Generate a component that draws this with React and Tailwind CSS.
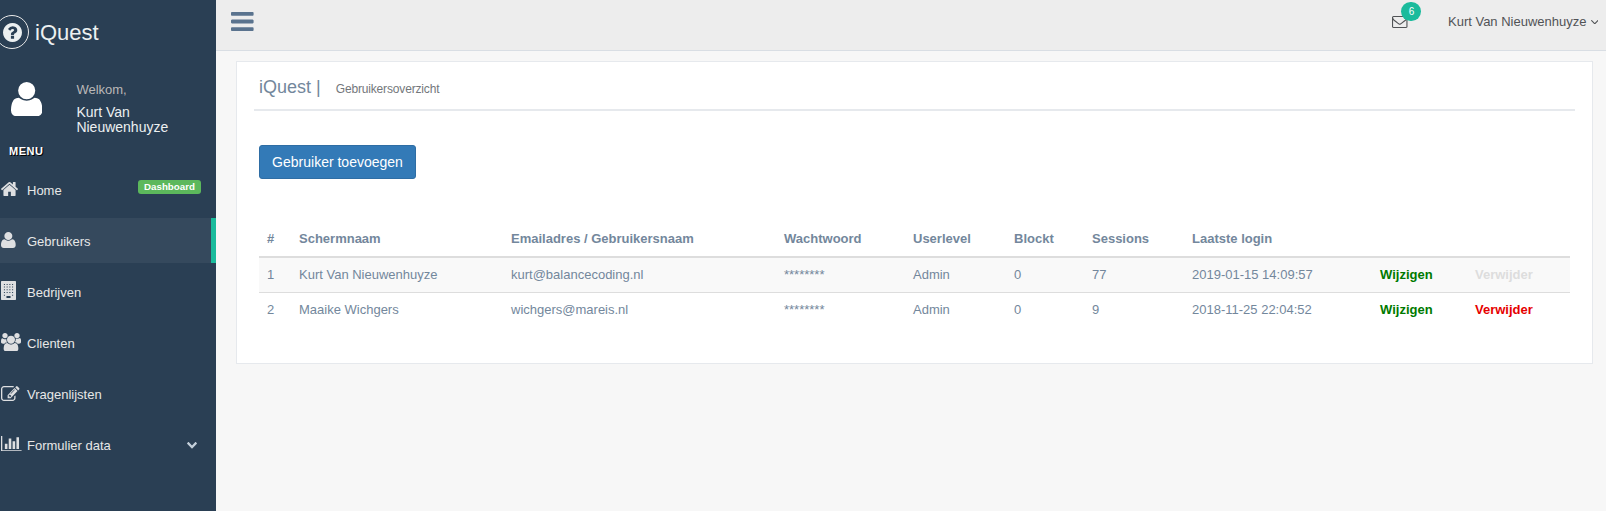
const PERSON =
  "M1664 1533q0 120-73 189.5t-194 69.5h-874q-121 0-194-69.5t-73-189.5q0-53 3.5-103.5t14-109 26.5-108.5 43-97.5 62-81 85.5-53.5 111.5-20q10 0 43 21.5t73 48 107 48 135 21.5 135-21.5 107-48 73-48 43-21.5q61 0 111.5 20t85.5 53.5 62 81 43 97.5 26.5 108.5 14 109 3.5 103.5zM1344 640q0 159-112.5 271.5t-271.5 112.5-271.5-112.5-112.5-271.5 112.5-271.5 271.5-112.5 271.5 112.5 112.5 271.5z";

const ICONS = {
  user: { box: "256 256 1408 1536", d: PERSON },
  home: {
    box: "89 253 1612 1283",
    d: "M1472 992v480q0 26-19 45t-45 19h-384v-384h-256v384h-384q-26 0-45-19t-19-45v-480q0-1 .5-3t.5-3l575-474 575 474q1 2 1 6zm223-69l-62 74q-8 9-21 11h-3q-13 0-21-7l-692-577-692 577q-12 8-24 7-13-2-21-11l-62-74q-8-10-7-23.5t11-21.5l719-599q32-26 76-26t76 26l244 204v-195q0-14 9-23t23-9h192q14 0 23 9t9 23v408l219 182q10 8 11 21.5t-7 23.5z",
  },
  users: {
    box: "0 0 1920 1792",
    d:
      PERSON +
      "M593 896q-162 5-265 128h-134q-82 0-138-40.5t-56-118.5q0-353 124-353 6 0 43.5 21t97.5 42.5 119 21.5q67 0 133-23-5 37-5 66 0 159 93 293zM640 256q0 106-75 181t-181 75-181-75-75-181 75-181 181-75 181 75 75 181zM1920 865q0 78-56 118.5t-138 40.5h-134q-103-123-265-128 93-134 93-293 0-29-5-66 66 23 133 23 59 0 119-21.5t97.5-42.5 43.5-21q124 0 124 353zm-128-609q0 106-75 181t-181 75-181-75-75-181 75-181 181-75 181 75 75 181z",
  },
  edit: {
    box: "0 128 1792 1408",
    d: "M888 1184l116-116-152-152-116 116v56h96v96h56zm440-720q-16-16-33 1l-350 350q-17 17-1 33t33-1l350-350q17-17 1-33zm80 594v190q0 119-84.5 203.5t-203.5 84.5h-832q-119 0-203.5-84.5t-84.5-203.5v-832q0-119 84.5-203.5t203.5-84.5h832q63 0 117 25 15 7 18 23 3 17-9 29l-49 49q-14 14-32 8-23-6-45-6h-832q-66 0-113 47t-47 113v832q0 66 47 113t113 47h832q66 0 113-47t47-113v-126q0-13 9-22l64-64q15-15 35-7t20 29zm-96-738l288 288-672 672h-288v-288zm444 132l-92 92-288-288 92-92q28-28 68-28t68 28l152 152q28 28 28 68t-28 68z",
  },
  chart: {
    box: "0 128 2048 1536",
    d: "M640 896v512h-256v-512h256zm384-512v1024h-256v-1024h256zm1024 1152v128h-2048v-1536h128v1408h1920zm-640-896v768h-256v-768h256zm384-384v1152h-256v-1152h256z",
  },
  chevron: {
    box: "90 533 1612 1035",
    d: "M1683 808l-742 741q-19 19-45 19t-45-19l-742-741q-19-19-19-45.5t19-45.5l166-165q19-19 45-19t45 19l531 531 531-531q19-19 45-19t45 19l166 165q19 19 19 45.5t-19 45.5z",
  },
  angle: {
    box: "397 653 998 582",
    d: "M1395 736q0 13-10 23l-466 466q-10 10-23 10t-23-10l-466-466q-10-10-10-23t10-23l50-50q10-10 23-10t23 10l393 393 393-393q10-10 23-10t23 10l50 50q10 10 10 23z",
  },
  question: {
    box: "128 128 1536 1536",
    d: "M1024 1376v-192q0-14-9-23t-23-9h-192q-14 0-23 9t-9 23v192q0 14 9 23t23 9h192q14 0 23-9t9-23zm256-672q0-88-55.5-163t-138.5-116-170-41q-243 0-371 213-15 24 8 42l132 100q7 6 19 6 16 0 25-12 53-68 86-92 34-24 86-24 48 0 85.5 26t37.5 59q0 38-20 61t-68 45q-63 28-115.5 86.5t-52.5 125.5v36q0 14 9 23t23 9h192q14 0 23-9t9-23q0-19 21.5-49.5t54.5-49.5q32-18 49-28.5t46-35 44.5-48 28-60.5 12.5-81zm384 192q0 209-103 385.5t-279.5 279.5-385.5 103-385.5-103-279.5-279.5-103-385.5 103-385.5 279.5-279.5 385.5-103 385.5 103 279.5 279.5 103 385.5z",
  },
  mail: {
    box: "0 256 1792 1408",
    d: "M1664 1504v-768q-32 36-69 66-268 206-426 338-51 43-83 67t-86.5 48.5-102.5 24.5h-2q-48 0-102.5-24.5t-86.5-48.5-83-67q-158-132-426-338-37-30-69-66v768q0 13 9.5 22.5t22.5 9.5h1472q13 0 22.5-9.5t9.5-22.5zm0-1051v-24.5l-.5-13-3-12.5-5.5-9-9-7.5-14-2.5h-1472q-13 0-22.5 9.5t-9.5 22.5q0 168 147 284 193 152 401 317 6 5 35 29.5t46 37.5 44.5 31.5 50.5 27.5 43 9h2q20 0 43-9t50.5-27.5 44.5-31.5 46-37.5 35-29.5q208-165 401-317 54-43 100.5-115.5t46.5-131.5zm128-37v1088q0 66-47 113t-113 47h-1472q-66 0-113-47t-47-113v-1088q0-66 47-113t113-47h1472q66 0 113 47t47 113z",
  },
  bars: {
    box: "128 256 1536 1280",
    d: "M1664 1344v128q0 26-19 45t-45 19h-1408q-26 0-45-19t-19-45v-128q0-26 19-45t45-19h1408q26 0 45 19t19 45zm0-512v128q0 26-19 45t-45 19h-1408q-26 0-45-19t-19-45v-128q0-26 19-45t45-19h1408q26 0 45 19t19 45zm0-512v128q0 26-19 45t-45 19h-1408q-26 0-45-19t-19-45v-128q0-26 19-45t45-19h1408q26 0 45 19t19 45z",
  },
};

// Building outline, then a 4x5 grid of windows and the door as cut-outs.
const windows = [256, 512, 768, 1024]
  .flatMap((x) =>
    [256, 512, 768, 1024, 1280]
      .filter((y) => y < 1280 || x === 256 || x === 1024)
      .map((y) => `M${x + 16} ${y + 16}h96v96h-96z`)
  )
  .join("");
ICONS.building = {
  box: "0 0 1408 1792",
  d: `M64 0h1280q64 0 64 64v1664q0 64-64 64h-1280q-64 0-64-64v-1664q0-64 64-64z${windows}M512 1408h384v192h-384z`,
};

function Icon({ name, className }) {
  const { box, d } = ICONS[name];
  return (
    <svg viewBox={box} preserveAspectRatio="none" fill="currentColor" fillRule={name === "building" ? "evenodd" : "nonzero"} className={`block shrink-0 ${className}`}>
      <path d={d} />
    </svg>
  );
}

const NAV = [
  { label: "Home", icon: "home", size: "w-[17px] h-[14px] mb-[2px]", badge: "Dashboard" },
  { label: "Gebruikers", icon: "user", size: "w-[14.7px] h-4 mb-[1px]", active: true },
  { label: "Bedrijven", icon: "building", size: "w-[15px] h-[19px] mb-[2px]" },
  { label: "Clienten", icon: "users", size: "w-[20px] h-[18.6px] mb-[1px]" },
  { label: "Vragenlijsten", icon: "edit", size: "w-[18.5px] h-[15px] mb-[1px]" },
  { label: "Formulier data", icon: "chart", size: "w-[20.6px] h-[15.5px] mb-[2px]", chevron: true },
];

function Sidebar() {
  return (
    <aside className="flex h-[511px] w-[216px] shrink-0 flex-col overflow-hidden bg-[#2A3F54]">
      <div className="flex h-16 items-center">
        <span className="-ml-[5px] flex size-[34px] shrink-0 items-center justify-center rounded-full border border-[#EAEAEA] text-[#ECF0F1]">
          <Icon name="question" className="size-[19px]" />
        </span>
        <span className="ml-[6px] text-[22px] text-[#ECF0F1]">iQuest</span>
      </div>
      <div className="flex h-[74px] pt-[18px] text-white">
        <Icon name="user" className="ml-[11px] h-[34.3px] w-[31.4px]" />
        <div className="ml-[34px] w-[120px]">
          <div className="text-[13px] leading-4 text-[#BAB8B8]">Welkom,</div>
          <div className="mt-[7px] text-[14px] leading-[15.4px] text-[#ECF0F1]">Kurt Van Nieuwenhuyze</div>
        </div>
      </div>
      <h3 className="mt-[5px] h-[24px] pl-[9px] text-[11px] leading-4 font-bold tracking-[.5px] text-white [text-shadow:1px_1px_#000]">MENU</h3>
      <ul className="flex flex-col gap-[6px]">
        {NAV.map((n) => (
          <li key={n.label} className={n.active ? "flex h-[45px] items-center border-r-[5px] border-[#1ABB9C] bg-[#35495D]" : "flex h-[45px] items-center"}>
            <span className="flex w-[26px] shrink-0 items-center pl-px text-[#DEDFE1]">
              <Icon name={n.icon} className={n.size} />
            </span>
            <span className="ml-px pt-[2px] text-[13px] text-[#E7E7E7]">{n.label}</span>
            {n.badge && <span className="mr-[15px] mb-[6px] ml-auto h-[14px] w-[63px] rounded-[3px] bg-[#5CB85C] text-center text-[9.75px] leading-[14px] font-bold text-white">{n.badge}</span>}
            {n.chevron && <Icon name="chevron" className="mt-[2px] mr-[19px] ml-auto h-[6.5px] w-[10px] text-[#C4CFDA]" />}
          </li>
        ))}
      </ul>
    </aside>
  );
}

function Topbar() {
  return (
    <header className="flex h-[51px] justify-between border-b border-[#D9DEE4] bg-[#EDEDED]">
      <Icon name="bars" className="mt-3 ml-[15px] h-[19px] w-[22.6px] text-[#5A738E]" />
      <div className="flex h-[43px] items-center pr-[8px] text-[13px] text-[#515356]">
        <div className="relative mr-[40px]">
          <Icon name="mail" className="h-3 w-[15.5px]" />
          <span className="absolute -top-[14px] left-[9px] flex h-[19px] w-5 items-center justify-center rounded-full bg-[#1ABB9C] text-[10px] text-white">6</span>
        </div>
        <span className="whitespace-nowrap">Kurt Van Nieuwenhuyze</span>
        <Icon name="angle" className="mt-px ml-[4px] h-[4.5px] w-[7.5px]" />
      </div>
    </header>
  );
}

const HEADERS = ["#", "Schermnaam", "Emailadres / Gebruikersnaam", "Wachtwoord", "Userlevel", "Blockt", "Sessions", "Laatste login", "", ""];
const ROWS = [
  ["1", "Kurt Van Nieuwenhuyze", "kurt@balancecoding.nl", "********", "Admin", "0", "77", "2019-01-15 14:09:57"],
  ["2", "Maaike Wichgers", "wichgers@mareis.nl", "********", "Admin", "0", "9", "2018-11-25 22:04:52"],
];
const COLUMNS = "grid grid-cols-[32px_212px_273px_129px_101px_78px_100px_188px_95px_103px] items-center";

function UsersTable() {
  return (
    <div role="table" className="mt-[42px] w-[1311px] text-[13px] leading-[19px] whitespace-nowrap text-[#73879C]">
      <div role="row" className={`${COLUMNS} h-[37px] border-b-2 border-[#DDDDDD] font-bold`}>
        {HEADERS.map((h, i) => (
          <div role="columnheader" key={i} className="pl-2">{h}</div>
        ))}
      </div>
      {ROWS.map((r, i) => (
        <div role="row" key={i} className={`${COLUMNS} pb-[2px] ${i ? "h-[35px] border-t border-[#DDDDDD]" : "h-[34px] bg-[#F9F9F9]"}`}>
          {r.map((c, j) => (
            <div role="cell" key={j} className="pl-2">{c}</div>
          ))}
          <div role="cell" className="pl-2 font-bold text-[#007A00]">Wijzigen</div>
          <div role="cell" className={i ? "pl-2 font-bold text-[#E60000]" : "pl-2 font-bold text-[#DDDDDD]"}>Verwijder</div>
        </div>
      ))}
    </div>
  );
}

export default function App() {
  return (
    <div className="flex h-[511px] w-[1606px] overflow-hidden bg-[#F7F7F7] font-['Liberation_Sans',Arial,sans-serif]">
      <Sidebar />
      <div className="flex min-w-0 flex-1 flex-col">
        <Topbar />
        <main className="mt-[10px] ml-5 h-[303px] w-[1357px] border border-[#E6E9ED] bg-white px-[17px]">
          <div className="flex h-[49px] items-baseline border-b-2 border-[#E6E9ED] pt-[11px] pl-[5px]">
            <h2 className="text-[18px] leading-7 text-[#73879C]">iQuest |</h2>
            <small className="ml-[15px] text-[12px] tracking-[-0.16px] text-[#73777B]">Gebruikersoverzicht</small>
          </div>
          <div className="pt-[34px] pl-[5px]">
            <button className="block h-[34px] w-[157px] rounded-[3px] border border-[#2E6DA4] bg-[#337AB7] text-[14px] text-white">Gebruiker toevoegen</button>
            <UsersTable />
          </div>
        </main>
      </div>
    </div>
  );
}
